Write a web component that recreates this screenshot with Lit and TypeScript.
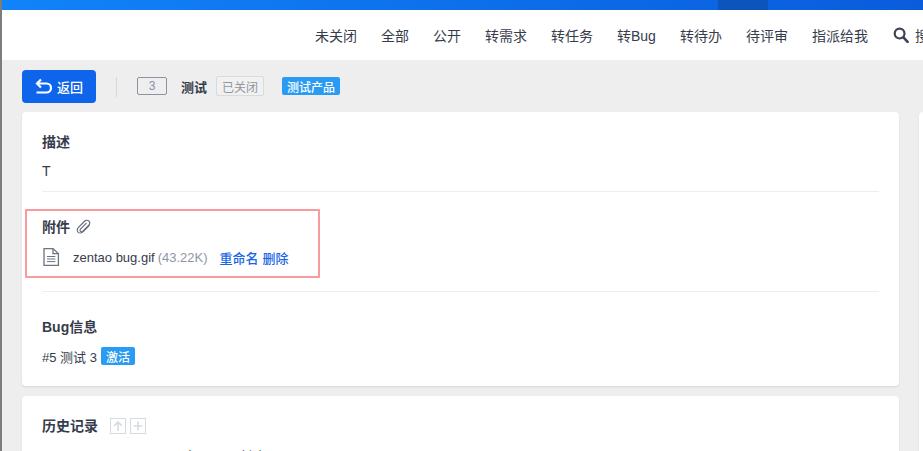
import { LitElement, html, css } from "lit";
import { customElement } from "lit/decorators.js";

const NAV = ["未关闭", "全部", "公开", "转需求", "转任务", "转Bug", "转待办", "待评审", "指派给我"];

@customElement("app-root")
export class AppRoot extends LitElement {
  static styles = css`
    :host {
      display: block;
      position: relative;
      width: 923px;
      height: 451px;
      overflow: hidden;
      background: #eeeeee;
      font-family: "Liberation Sans", "Noto Sans CJK SC", sans-serif;
      font-size: 13px;
      color: #363c4b;
    }
    .edge {
      position: absolute;
      left: 0;
      top: 0;
      bottom: 0;
      width: 2px;
      background: #7d7d7d;
      z-index: 3;
    }
    .top {
      height: 10px;
      background: linear-gradient(90deg, #1183fb 0%, #0a5cdb 100%);
      display: flex;
      justify-content: flex-end;
      padding-right: 155px;
    }
    .top i {
      display: block;
      width: 50px;
      background: #0c55bd;
    }
    .nav {
      height: 50px;
      background: #fff;
      display: flex;
      align-items: center;
      gap: 24px;
      padding-left: 315px;
      font-size: 14px;
      white-space: nowrap;
      overflow: hidden;
    }
    .search {
      display: flex;
      align-items: center;
      gap: 6px;
      margin-left: 1px;
    }
    .toolbar {
      display: flex;
      align-items: center;
      height: 33px;
      margin: 10px 0 9px 22px;
    }
    .back {
      width: 74px;
      height: 33px;
      box-sizing: border-box;
      border-radius: 4px;
      background: #0e65ec;
      color: #fff;
      display: flex;
      align-items: center;
      justify-content: center;
      gap: 5px;
      font-size: 13px;
      font-weight: 500;
    }
    .sep {
      width: 1px;
      height: 20px;
      background: #d8d8d8;
      margin: 0 20px;
    }
    .id {
      width: 30px;
      height: 18px;
      box-sizing: border-box;
      border: 1px solid #8a92a6;
      border-radius: 2px;
      color: #8a92a6;
      font-size: 12px;
      display: flex;
      align-items: center;
      justify-content: center;
      margin: 0 14px 1px 0;
    }
    .name {
      font-weight: 700;
      font-size: 13px;
      margin-right: 9px;
    }
    .closed {
      width: 48px;
      height: 20px;
      box-sizing: border-box;
      border: 1px solid #d8dade;
      border-radius: 2px;
      background: #f1f1f1;
      color: #92969f;
      font-size: 12px;
      display: flex;
      align-items: center;
      justify-content: center;
      margin: 0 18px 1px 0;
    }
    .chip {
      background: #2a9bf2;
      color: #fff;
      border-radius: 2px;
      font-size: 12px;
      font-weight: 500;
      height: 18px;
      display: inline-flex;
      align-items: center;
      justify-content: center;
    }
    .product { width: 58px; margin-bottom: 1px; }
    .layout {
      display: flex;
      gap: 20px;
      margin-left: 22px;
    }
    .col {
      width: 877px;
      flex: none;
      display: flex;
      flex-direction: column;
      gap: 10px;
    }
    .card {
      background: #fff;
      border-radius: 4px;
      box-shadow: 0 1px 2px rgba(0, 0, 0, 0.1);
    }
    .main { height: 274px; box-sizing: border-box; padding: 0 20px; }
    .side { width: 100px; flex: none; height: 400px; }
    .history { height: 100px; padding: 0 20px; box-sizing: border-box; }
    .title {
      font-size: 14px;
      font-weight: 700;
      line-height: 20px;
      display: flex;
      align-items: center;
    }
    .desc { height: 80px; padding-top: 20px; box-sizing: border-box; border-bottom: 1px solid #eeeeee; }
    .desc p { margin: 9px 0 0; line-height: 20px; font-size: 14px; }
    .files { height: 100px; padding-top: 25px; box-sizing: border-box; border-bottom: 1px solid #eeeeee; }
    .clip { margin-left: 6px; }
    .file {
      display: flex;
      align-items: center;
      height: 22px;
      margin-top: 9px;
      font-size: 13px;
      white-space: nowrap;
    }
    .fileicon { margin-right: 13px; }
    .size { color: #8f95a6; margin-left: 3px; }
    .act { color: #1766e6; margin-left: 12px; font-size: 13px; font-weight: 500; }
    .act + .act { margin-left: 4px; }
    .info { padding-top: 25px; }
    .bugline {
      display: flex;
      align-items: center;
      gap: 4px;
      margin-top: 9px;
      font-size: 13px;
      height: 20px;
    }
    .status { width: 34px; }
    .history .title { padding-top: 20px; }
    .mini {
      width: 16px;
      height: 16px;
      box-sizing: border-box;
      border: 1px solid #d5dae5;
      display: flex;
      align-items: center;
      justify-content: center;
    }
    .mini.first { margin-left: 12px; margin-right: 4px; }
    .log {
      margin: 11px 0 0;
      font-size: 13px;
      line-height: 20px;
      white-space: nowrap;
    }
    .mark {
      position: absolute;
      left: 25px;
      top: 209px;
      width: 295px;
      height: 69px;
      box-sizing: border-box;
      border: 2px solid #f99a9c;
      border-radius: 1px;
      z-index: 2;
      pointer-events: none;
    }
  `;

  render() {
    return html`
      <div class="edge"></div>
      <div class="top"><i></i></div>
      <nav class="nav">
        ${NAV.map((n) => html`<span>${n}</span>`)}
        <span class="search">
          <svg width="16" height="16" viewBox="0 0 16 16" fill="none" stroke="#3c4353">
            <circle cx="6.6" cy="6.6" r="4.9" stroke-width="2.2"></circle>
            <path d="M10.4 10.4 L14.6 14.8" stroke-width="2.6" stroke-linecap="round"></path>
          </svg>
          <span>搜索</span>
        </span>
      </nav>
      <div class="toolbar">
        <div class="back">
          <svg width="17" height="17" viewBox="0 0 17 17" fill="none" stroke="#fff" stroke-width="2.2">
            <path d="M6 1.5 L2 5.5 L6 9.5"></path>
            <path d="M2.5 5.5 H11.5 A4.4 4.4 0 0 1 11.5 14.5 H1.5"></path>
          </svg>
          <span>返回</span>
        </div>
        <div class="sep"></div>
        <div class="id">3</div>
        <span class="name">测试</span>
        <span class="closed">已关闭</span>
        <span class="chip product">测试产品</span>
      </div>
      <div class="layout">
        <div class="col">
          <section class="card main">
            <div class="desc">
              <div class="title">描述</div>
              <p>T</p>
            </div>
            <div class="files">
              <div class="title">
                附件
                <svg class="clip" width="16" height="16" viewBox="0 0 16 16" fill="none" stroke="#5f6675" stroke-width="1.1">
                  <path d="M13.6 6.2 L7.2 12.7 C5.6 14.3 3.2 14.4 2 13.2 C0.8 12 1 9.8 2.5 8.3 L8.8 2 C9.9 0.9 11.8 0.9 13 2.1 C14.1 3.2 14.1 4.9 13 6 L6.9 12.1 C6.1 12.9 5 12.9 4.4 12.3 C3.8 11.7 3.9 10.6 4.7 9.8 L10.4 4.2"></path>
                </svg>
              </div>
              <div class="file">
                <svg class="fileicon" width="18" height="20" viewBox="0 0 18 20" fill="none" stroke="#6d7482" stroke-width="1.3">
                  <path d="M2 1.6 H11 L16.4 6.6 V18.4 H2 Z"></path>
                  <path d="M11 1.6 V6.6 H16.4"></path>
                  <path d="M5 9.5 H13.4 M5 12 H13.4 M5 14.6 H13.4" stroke-width="1"></path>
                </svg>
                <span>zentao bug.gif</span><span class="size">(43.22K)</span>
                <span class="act">重命名</span><span class="act">删除</span>
              </div>
            </div>
            <div class="info">
              <div class="title">Bug信息</div>
              <div class="bugline">
                <span>#5 测试 3</span>
                <span class="chip status">激活</span>
              </div>
            </div>
          </section>
          <section class="card history">
            <div class="title">
              历史记录
              <span class="mini first">
                <svg width="12" height="12" viewBox="0 0 12 12" fill="none" stroke="#d5dae5" stroke-width="1.6"><path d="M6 11 V2 M2 6 L6 2 L10 6"></path></svg>
              </span>
              <span class="mini">
                <svg width="12" height="12" viewBox="0 0 12 12" fill="none" stroke="#d5dae5" stroke-width="1.6"><path d="M6 1.5 V10.5 M1.5 6 H10.5"></path></svg>
              </span>
            </div>
            <p class="log">1. 2019-10-11 10:10:45, 由 admin 创建。</p>
          </section>
        </div>
        <aside class="card side"></aside>
      </div>
      <div class="mark"></div>
    `;
  }
}
